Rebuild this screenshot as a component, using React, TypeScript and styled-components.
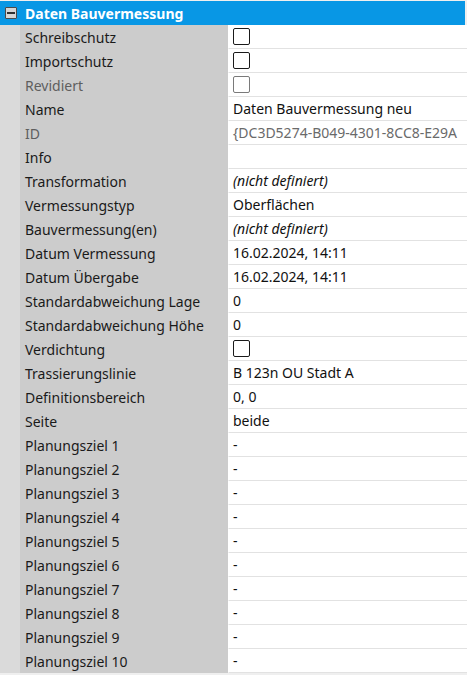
import React from "react";
import styled, { createGlobalStyle } from "styled-components";

const Global = createGlobalStyle`
  html, body {
    margin: 0;
    padding: 0;
    background: #ffffff;
  }
  body {
    font-family: "Noto Sans", "Open Sans", sans-serif;
    font-size: 14px;
  }
`;

const Panel = styled.div`
  width: 467px;
  height: 675px;
  overflow: hidden;
  padding-top: 1px;
  box-sizing: border-box;
  background: #efefef;
`;

const Header = styled.div`
  display: flex;
  align-items: center;
  height: 24px;
  margin-right: 2px;
  background: #0897e5;
  color: #ffffff;
  font-weight: 700;
  font-size: 14px;
  padding-left: 5px;
  gap: 8px;
`;

const Collapse = styled.span`
  display: flex;
  align-items: center;
  justify-content: center;
  width: 10px;
  height: 10px;
  border: 1px solid #4a4a4a;
  border-radius: 1px;
  background: #d6d6d6;
  &::after {
    content: "";
    width: 8px;
    height: 2px;
    background: #303030;
  }
`;

const Row = styled.div`
  display: flex;
  height: 24px;
`;

const Gutter = styled.div`
  width: 20px;
  flex: none;
  background: #dadada;
`;

const Label = styled.div<{ $dim?: boolean }>`
  width: 203px;
  flex: none;
  background: #cccccc;
  padding-left: 5px;
  display: flex;
  align-items: center;
  white-space: nowrap;
  color: ${(p) => (p.$dim ? "#5e5e5e" : "#1a1a1a")};
`;

const Value = styled.div<{ $dim?: boolean; $italic?: boolean }>`
  flex: 1;
  min-width: 0;
  background: #ffffff;
  border-left: 1px solid #ffffff;
  border-bottom: 1px solid #e2e2e2;
  padding-left: 4px;
  display: flex;
  align-items: center;
  white-space: nowrap;
  overflow: hidden;
  color: ${(p) => (p.$dim ? "#6a6a6a" : "#111111")};
  font-style: ${(p) => (p.$italic ? "italic" : "normal")};
`;

const Check = styled.span<{ $dim?: boolean }>`
  width: 15px;
  height: 15px;
  border: 1.3px solid ${(p) => (p.$dim ? "#7a7a7a" : "#1a1a1a")};
  border-radius: 2px;
  background: #ffffff;
  margin-top: -1px;
`;

type Item = {
  label: string;
  value?: string;
  check?: boolean;
  dim?: boolean;
  italic?: boolean;
};

const items: Item[] = [
  { label: "Schreibschutz", check: true },
  { label: "Importschutz", check: true },
  { label: "Revidiert", check: true, dim: true },
  { label: "Name", value: "Daten Bauvermessung neu" },
  { label: "ID", value: "{DC3D5274-B049-4301-8CC8-E29A", dim: true },
  { label: "Info", value: "" },
  { label: "Transformation", value: "(nicht definiert)", italic: true },
  { label: "Vermessungstyp", value: "Oberflächen" },
  { label: "Bauvermessung(en)", value: "(nicht definiert)", italic: true },
  { label: "Datum Vermessung", value: "16.02.2024, 14:11" },
  { label: "Datum Übergabe", value: "16.02.2024, 14:11" },
  { label: "Standardabweichung Lage", value: "0" },
  { label: "Standardabweichung Höhe", value: "0" },
  { label: "Verdichtung", check: true },
  { label: "Trassierungslinie", value: "B 123n OU Stadt A" },
  { label: "Definitionsbereich", value: "0, 0" },
  { label: "Seite", value: "beide" },
  ...Array.from({ length: 10 }, (_, i) => ({
    label: `Planungsziel ${i + 1}`,
    value: "-",
  })),
];

const App = () => {
  return (
    <>
      <Global />
      <Panel>
        <Header>
          <Collapse />
          Daten Bauvermessung
        </Header>
        {items.map((it) => (
          <Row key={it.label}>
            <Gutter />
            <Label $dim={it.dim}>{it.label}</Label>
            <Value $dim={it.dim} $italic={it.italic}>
              {it.check ? <Check $dim={it.dim} /> : it.value}
            </Value>
          </Row>
        ))}
      </Panel>
    </>
  );
};

export default App;
